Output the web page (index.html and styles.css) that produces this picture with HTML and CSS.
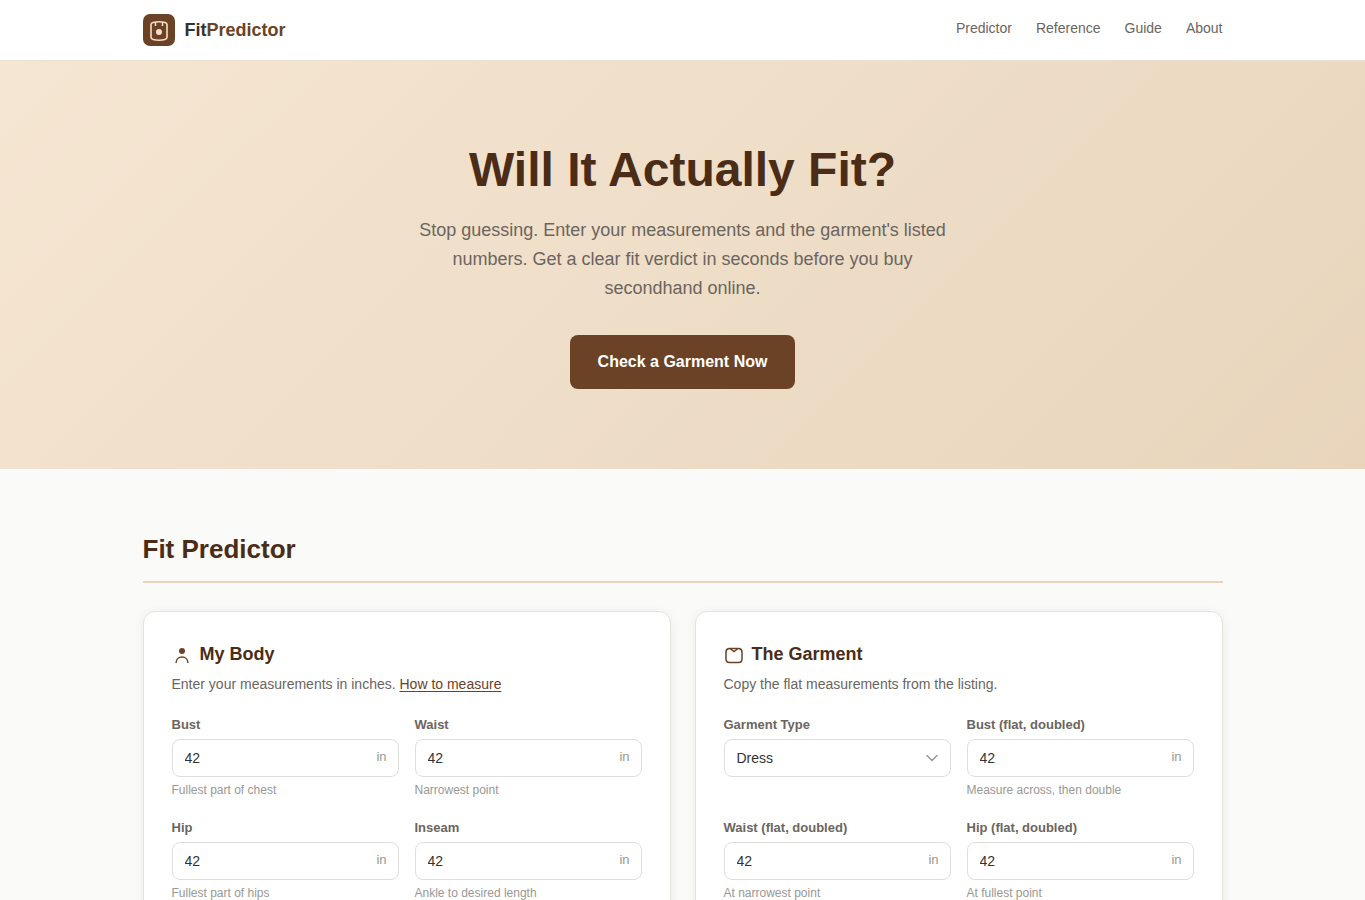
FILE: index.html
```html
<!DOCTYPE html>
<html lang="en">
<head>
<meta charset="utf-8">
<meta name="viewport" content="width=device-width, initial-scale=1">
<title>FitPredictor</title>
<link rel="stylesheet" href="styles.css">
</head>
<body>
<header class="site-header">
  <div class="container header-inner">
    <a class="logo" href="#top">
      <svg class="logo-mark" viewBox="0 0 32 32" aria-hidden="true">
        <rect width="32" height="32" rx="7" fill="#6b4226"/>
        <path d="M8 10.500q0-1.500 2-2 6-1.500 12 0 2 .5 2 2v12.500q0 2-2 2.500-6 1.500-12 0-2-.5-2-2.500z" fill="none" stroke="#f5dfc5" stroke-width="1.600"/>
        <path d="M12.500 8v4M19.500 8v4" stroke="#f5dfc5" stroke-width="1.500"/>
        <circle cx="16" cy="18" r="3" fill="#f5dfc5"/>
      </svg>
      <span class="logo-text">Fit<span class="logo-accent">Predictor</span></span>
    </a>
    <nav class="nav" aria-label="Main">
      <a href="#predictor">Predictor</a>
      <a href="#reference">Reference</a>
      <a href="#guide">Guide</a>
      <a href="#about">About</a>
    </nav>
  </div>
</header>
<main id="top">
  <section class="hero">
    <h1>Will It Actually Fit?</h1>
    <p class="hero-text">Stop guessing. Enter your measurements and the garment's listed numbers. Get a clear fit verdict in seconds before you buy secondhand online.</p>
    <a class="button" href="#predictor">Check a Garment Now</a>
  </section>
  <section class="container predictor" id="predictor">
    <h2>Fit Predictor</h2>
    <div class="cards">
      <form class="card">
        <h3>
          <svg class="card-icon" viewBox="0 0 20 20" fill="none" aria-hidden="true">
            <circle cx="10" cy="6" r="3" fill="#6b4226"/>
            <path d="M4 18c0-3.500 2.500-6 6-6s6 2.500 6 6" stroke="#6b4226" stroke-width="1.500"/>
          </svg>
          My Body
        </h3>
        <p class="card-text">Enter your measurements in inches. <a href="#guide">How to measure</a></p>
        <div class="fields">
          <div class="field">
            <label for="body-bust">Bust</label>
            <div class="control"><input id="body-bust" type="number" value="42"><span class="unit">in</span></div>
            <span class="hint">Fullest part of chest</span>
          </div>
          <div class="field">
            <label for="body-waist">Waist</label>
            <div class="control"><input id="body-waist" type="number" value="42"><span class="unit">in</span></div>
            <span class="hint">Narrowest point</span>
          </div>
          <div class="field">
            <label for="body-hip">Hip</label>
            <div class="control"><input id="body-hip" type="number" value="42"><span class="unit">in</span></div>
            <span class="hint">Fullest part of hips</span>
          </div>
          <div class="field">
            <label for="body-inseam">Inseam</label>
            <div class="control"><input id="body-inseam" type="number" value="42"><span class="unit">in</span></div>
            <span class="hint">Ankle to desired length</span>
          </div>
        </div>
      </form>
      <form class="card">
        <h3>
          <svg class="card-icon" viewBox="0 0 20 20" fill="none" stroke="#6b4226" stroke-width="1.500" aria-hidden="true">
            <path d="M2 7q0-3 3-3.500h10q3 .5 3 3.500v7q0 3.500-3.500 3.500h-9q-3.500 0-3.500-3.500z"/>
            <path d="M6 3.500l4 3 4-3"/>
          </svg>
          The Garment
        </h3>
        <p class="card-text">Copy the flat measurements from the listing.</p>
        <div class="fields">
          <div class="field">
            <label for="garment-type">Garment Type</label>
            <div class="control">
              <select id="garment-type"><option>Dress</option></select>
              <svg class="chevron" viewBox="0 0 12 8" aria-hidden="true"><path d="M1 1.500l5 5 5-5" fill="none" stroke="#999894" stroke-width="1.500" stroke-linecap="round" stroke-linejoin="round"/></svg>
            </div>
          </div>
          <div class="field">
            <label for="garment-bust">Bust (flat, doubled)</label>
            <div class="control"><input id="garment-bust" type="number" value="42"><span class="unit">in</span></div>
            <span class="hint">Measure across, then double</span>
          </div>
          <div class="field">
            <label for="garment-waist">Waist (flat, doubled)</label>
            <div class="control"><input id="garment-waist" type="number" value="42"><span class="unit">in</span></div>
            <span class="hint">At narrowest point</span>
          </div>
          <div class="field">
            <label for="garment-hip">Hip (flat, doubled)</label>
            <div class="control"><input id="garment-hip" type="number" value="42"><span class="unit">in</span></div>
            <span class="hint">At fullest point</span>
          </div>
        </div>
      </form>
    </div>
  </section>
</main>
</body>
</html>
```
FILE: styles.css
```css
* { box-sizing: border-box; }

body {
  margin: 0;
  background: #fafaf8;
  color: #333;
  font-family: "Liberation Sans", Arial, sans-serif;
  font-size: 16px;
  line-height: 1.6;
}

h1, h2, h3, p { margin: 0; }

.container {
  max-width: 1128px;
  margin: 0 auto;
  padding: 0 24px;
}

.site-header {
  background: #fff;
  border-bottom: 1px solid #ece0d2;
}

.header-inner {
  display: flex;
  align-items: center;
  justify-content: space-between;
  min-height: 60px;
}

.logo {
  display: flex;
  align-items: center;
  gap: 10px;
  color: #333;
  font-size: 18px;
  font-weight: 700;
  text-decoration: none;
}

.logo-mark { width: 32px; height: 32px; }

.logo-accent { color: #6b4226; }

.nav {
  display: flex;
  gap: 24px;
  padding-bottom: 4px;
}

.nav a {
  color: #6b6560;
  font-size: 14px;
  text-decoration: none;
}

.hero {
  display: flex;
  flex-direction: column;
  align-items: center;
  padding: 80px 24px;
  background: linear-gradient(135deg, #f5e6d3 0%, #e8d5bc 100%);
  text-align: center;
}

.hero h1 {
  color: #4a2c17;
  font-size: 48px;
  line-height: 58px;
}

.hero-text {
  max-width: 560px;
  margin: 17px 0 32px;
  color: #6b6560;
  font-size: 18px;
  line-height: 29px;
}

.button {
  padding: 14px 28px;
  border-radius: 8px;
  background: #6b4226;
  color: #fff;
  font-weight: 700;
  text-decoration: none;
}

.predictor {
  padding-top: 60px;
  padding-bottom: 60px;
}

.predictor h2 {
  margin-bottom: 28px;
  padding-bottom: 12px;
  border-bottom: 2px solid #e8d5bc;
  color: #4a2c17;
  font-size: 26px;
  line-height: 40px;
}

.cards {
  display: grid;
  grid-template-columns: repeat(auto-fit, minmax(320px, 1fr));
  gap: 24px;
}

.card {
  padding: 28px;
  border: 1px solid #e5e2de;
  border-radius: 12px;
  background: #fff;
  box-shadow: 0 2px 12px rgba(0, 0, 0, 0.06);
}

.card h3 {
  display: flex;
  align-items: center;
  gap: 8px;
  color: #4a2c17;
  font-size: 18px;
  line-height: 28px;
}

.card-icon {
  width: 20px;
  height: 20px;
  margin-top: 2px;
}

.card-text {
  margin: 5px 0 20px;
  color: #6b6560;
  font-size: 14px;
  line-height: 22px;
}

.card-text a {
  color: #6b4226;
  text-underline-offset: 2px;
}

.fields {
  display: grid;
  grid-template-columns: 1fr 1fr;
  gap: 18px 16px;
}

.field {
  display: flex;
  flex-direction: column;
}

.field label {
  margin-bottom: 4px;
  color: #6b6560;
  font-size: 13px;
  font-weight: 700;
  line-height: 20px;
}

.control {
  display: grid;
  align-items: center;
}

.control > * { grid-area: 1 / 1; }

.control input,
.control select {
  appearance: none;
  width: 100%;
  height: 38px;
  padding: 0 36px 0 12px;
  border: 1px solid #e0deda;
  border-radius: 8px;
  background: #fff;
  color: #333;
  font-family: inherit;
  font-size: 14px;
}

.control input { appearance: textfield; }

.unit {
  justify-self: end;
  margin-right: 12px;
  color: #999894;
  font-size: 13px;
  pointer-events: none;
}

.chevron {
  justify-self: end;
  width: 12px;
  height: 8px;
  margin-right: 13px;
  pointer-events: none;
}

.hint {
  margin-top: 3px;
  color: #999894;
  font-size: 12px;
  line-height: 20px;
}
```
